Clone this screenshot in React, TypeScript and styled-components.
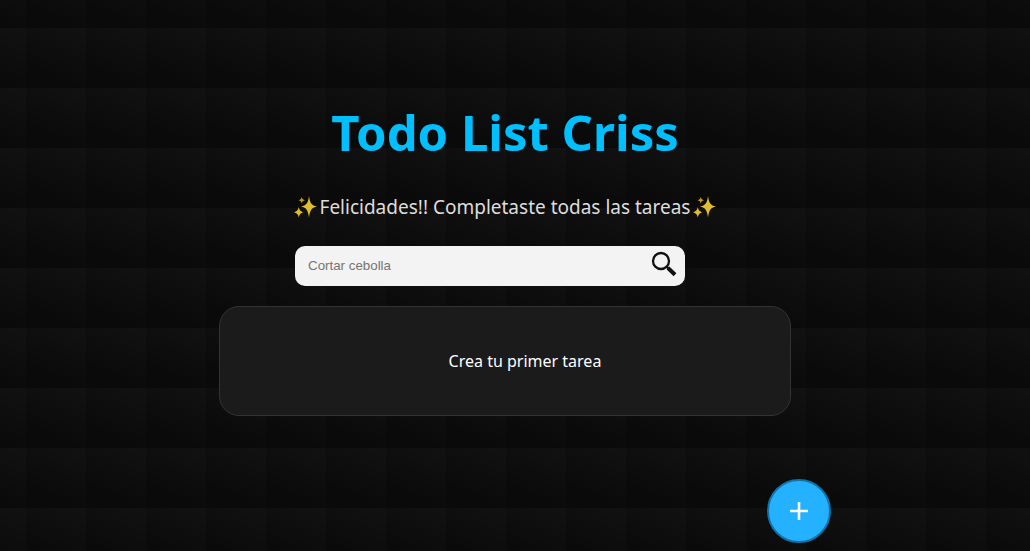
import React, { useState } from 'react';
import styled, { createGlobalStyle } from 'styled-components';

const GlobalStyle = createGlobalStyle`
  * { box-sizing: border-box; }
  body {
    margin: 0;
    min-height: 100vh;
    background-color: #0a0a0a;
    background-image: linear-gradient(205deg, #121212, #0a0a0a 75%);
    background-size: 60px 60px;
    background-position: 26px 28px;
    font-family: "Noto Sans", sans-serif;
    color: #ffffff;
  }
`;

const Page = styled.main`
  display: flex;
  flex-direction: column;
  align-items: center;
  padding: 96px 20px 0 0;
`;

const Title = styled.h1`
  margin: 0;
  font-size: 49px;
  line-height: 72px;
  font-weight: 700;
  color: #00bfff;
`;

const Message = styled.h2`
  display: flex;
  align-items: center;
  gap: 2px;
  margin: 24px 0;
  font-size: 19px;
  line-height: 30px;
  font-weight: 400;
  color: #dddddd;
`;

const SparkleIcon = styled.svg`
  width: 25px;
  height: 24px;
`;

const SearchForm = styled.form`
  display: flex;
  align-items: center;
  width: 390px;
  max-width: 90%;
  height: 40px;
  margin-right: 30px;
  padding-right: 8px;
  border-radius: 10px;
  background: #f3f3f3;
`;

const SearchInput = styled.input`
  flex: 1;
  min-width: 0;
  height: 100%;
  padding: 0 13px 2px;
  border: 0;
  outline: 0;
  background: transparent;
  font-family: "Liberation Sans", sans-serif;
  color: #111111;
  &::placeholder { color: #757575; }
`;

const SearchButton = styled.button`
  display: flex;
  padding: 0 0 4px;
  border: 0;
  background: transparent;
  cursor: pointer;
`;

const TaskPanel = styled.section`
  width: 572px;
  max-width: 90%;
  margin-top: 20px;
  padding: 43px 0;
  border: 1px solid #333333;
  border-radius: 20px;
  background: #1b1b1b;
`;

const TaskList = styled.ul`
  margin: 0;
  padding-left: 40px;
  list-style: none;
  text-align: center;
`;

const TaskHint = styled.li`
  font-size: 16px;
  line-height: 22px;
`;

const AddButton = styled.button`
  position: fixed;
  right: 199px;
  bottom: 8px;
  display: flex;
  align-items: center;
  justify-content: center;
  width: 64px;
  height: 64px;
  padding: 0;
  border: 2px solid #0f73aa;
  border-radius: 50%;
  background: #24b1ff;
  cursor: pointer;
`;

function Sparkles() {
  return (
    <SparkleIcon viewBox="0 0 25 24" aria-hidden="true">
      <path fill="#e0bd30" d="M16 1C17 8 18.500 10.500 24 11.500C18.500 12.500 17 15.500 16 22.500C15 15.500 13.500 12.500 8 11.500C13.500 10.500 15 8 16 1Z" />
      <path fill="#e0bd30" d="M5.800 12C6.500 15.300 7.500 16.500 10.500 17.200C7.500 18 6.500 19.200 5.800 22.500C5.100 19.200 4 18 1 17.200C4 16.500 5.100 15.300 5.800 12Z" />
      <path fill="#c8951b" d="M8.800 1.800C9.200 4 9.900 4.700 12 5.200C9.900 5.700 9.200 6.500 8.800 8.700C8.400 6.500 7.600 5.700 5.500 5.200C7.600 4.700 8.400 4 8.800 1.800Z" />
    </SparkleIcon>
  );
}

export default function App() {
  const [query, setQuery] = useState('');
  return (
    <>
      <GlobalStyle />
      <Page>
        <Title>Todo List Criss</Title>
        <Message>
          <Sparkles />
          Felicidades!! Completaste todas las tareas
          <Sparkles />
        </Message>
        <SearchForm role="search" onSubmit={(event) => event.preventDefault()}>
          <SearchInput
            aria-label="Buscar tarea"
            placeholder="Cortar cebolla"
            value={query}
            onChange={(event) => setQuery(event.target.value)}
          />
          <SearchButton type="submit" aria-label="Buscar">
            <svg width="26" height="26" viewBox="0 0 26 26" fill="none" stroke="#111111">
              <circle cx="10" cy="10" r="8" strokeWidth="2.300" />
              <path d="M15.500 15.500L18 18" strokeWidth="2.400" />
              <path d="M17 17L24 23.800" strokeWidth="4" />
            </svg>
          </SearchButton>
        </SearchForm>
        <TaskPanel>
          <TaskList>
            <TaskHint>Crea tu primer tarea</TaskHint>
          </TaskList>
        </TaskPanel>
      </Page>
      <AddButton type="button" aria-label="Crear tarea">
        <svg width="18" height="18" viewBox="0 0 18 18" stroke="#ffffff" strokeWidth="2.600">
          <path d="M9 0V18M0 9H18" />
        </svg>
      </AddButton>
    </>
  );
}
